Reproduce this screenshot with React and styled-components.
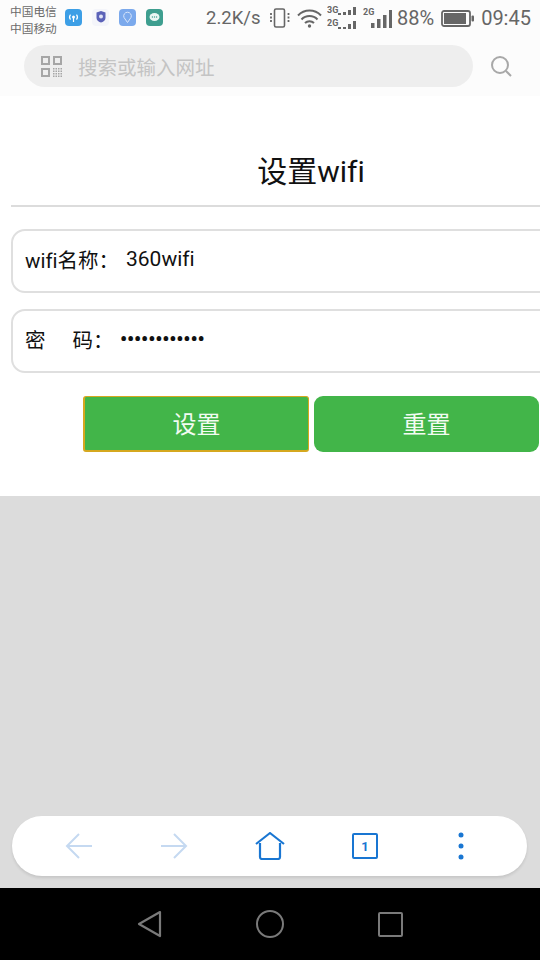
import React from 'react'
import styled, { createGlobalStyle } from 'styled-components'

const FONT = `Roboto, "Noto Sans CJK SC", sans-serif`
const BLUE = '#1976d2'
const STATUS_GREY = '#666'

const GlobalStyle = createGlobalStyle`
  html, body {
    margin: 0;
    padding: 0;
    background: #fff;
  }
  body {
    font-family: ${FONT};
    font-variant-ligatures: none;
  }
`

const Screen = styled.div`
  width: 540px;
  height: 960px;
  display: flex;
  flex-direction: column;
  overflow: hidden;
`

const TopArea = styled.div`
  height: 96px;
  flex: none;
  background: #fcfcfc;
`

const StatusBar = styled.div`
  height: 36px;
  margin-bottom: 9px;
  padding-left: 10px;
  display: flex;
  align-items: center;
  color: ${STATUS_GREY};
`

const Carriers = styled.div`
  font-size: 11.7px;
  line-height: 17px;
  width: 55px;
  color: #6a6a6a;
  margin-top: 5px;
  white-space: nowrap;
`

const AppIcons = styled.div`
  display: flex;
  gap: 10px;
  margin-bottom: 1px;
`

const AppIcon = styled.div`
  width: 17px;
  height: 17px;
  border-radius: 4px;
  background: ${({ $bg }) => $bg};
  display: flex;
  align-items: center;
  justify-content: center;
`

const Speed = styled.span`
  font-size: 18.5px;
  margin-left: 43px;
  width: 64px;
  flex: none;
  white-space: nowrap;
`

const StatusIcons = styled.div`
  display: flex;
  align-items: center;
`

const StatusText = styled.span`
  font-size: 20px;
  margin-left: ${({ $left }) => $left}px;
  white-space: nowrap;
`

const StatusIcon = styled.svg`
  margin-left: ${({ $left }) => $left || 0}px;
  flex: none;
`

const SearchRow = styled.div`
  display: flex;
  align-items: center;
`

const SearchBar = styled.div`
  width: 449px;
  height: 42px;
  margin-left: 24px;
  border-radius: 21px;
  background: #eeeeee;
  display: flex;
  align-items: center;
  padding-left: 17px;
  box-sizing: border-box;
`

const SearchHint = styled.span`
  font-size: 19.5px;
  color: #c4c4c4;
  margin-left: 16px;
`

const SearchButton = styled.div`
  margin-left: 17px;
  display: flex;
`

const Panel = styled.div`
  height: 400px;
  flex: none;
  width: 600px;
  margin-left: 11px;
  background: #fff;
  box-sizing: border-box;
`

const Title = styled.h1`
  margin: 0;
  height: 111px;
  box-sizing: border-box;
  padding-top: 57px;
  border-bottom: 2px solid #dcdcdc;
  text-align: center;
  font-size: 30px;
  line-height: 38px;
  font-weight: 400;
  color: #111;
`

const Field = styled.div`
  height: 64px;
  margin-top: ${({ $top }) => $top}px;
  border: 2px solid #dfdfdf;
  border-radius: 14px;
  box-sizing: border-box;
  display: flex;
  align-items: center;
  padding: 0 0 4px 12px;
  font-size: 21px;
  color: #111;
`

const FieldLabel = styled.span`
  width: ${({ $width }) => $width}px;
  flex: none;
  white-space: pre;
  font-size: ${({ $size }) => $size || 21}px;
  word-spacing: ${({ $gap }) => $gap || 0}px;
`

const Dots = styled.span`
  font-size: 20px;
  letter-spacing: -0.15px;
  font-weight: 700;
`

const Buttons = styled.div`
  display: flex;
  gap: 5px;
  margin: 23px 0 0 72px;
`

const Button = styled.div`
  width: ${({ $width }) => $width}px;
  height: 56px;
  box-sizing: border-box;
  border-radius: ${({ $focused }) => ($focused ? 3 : 9)}px;
  background: #42b549;
  border: ${({ $focused }) => ($focused ? '1px solid #d5a81f' : 'none')};
  border-left-width: ${({ $focused }) => ($focused ? 2 : 0)}px;
  border-bottom-width: ${({ $focused }) => ($focused ? 2 : 0)}px;
  color: #f2fbf2;
  font-size: 24px;
  padding-bottom: ${({ $focused }) => ($focused ? 3 : 4)}px;
  display: flex;
  align-items: center;
  justify-content: center;
`

const Backdrop = styled.div`
  flex: 1;
  background: #dcdcdc;
  padding: 320px 13px 0 12px;
`

const Toolbar = styled.div`
  height: 60px;
  border-radius: 30px;
  background: #fff;
  box-shadow: 0 2px 3px rgba(0, 0, 0, 0.1);
  display: grid;
  grid-template-columns: repeat(5, 95.5px);
  justify-content: center;
  align-items: center;
  justify-items: center;
`

const NavBar = styled.div`
  height: 72px;
  flex: none;
  background: #000;
  display: flex;
  align-items: center;
  justify-content: center;
  gap: 94px;
`

const TabBox = styled.div`
  width: 26px;
  height: 26px;
  border: 2px solid ${BLUE};
  border-radius: 2px;
  box-sizing: border-box;
  display: flex;
  align-items: center;
  justify-content: center;
  font-size: 13px;
  font-weight: 700;
  color: ${BLUE};
`

const Icon = ({ w, h, left, children }) => (
  <StatusIcon $left={left} width={w} height={h} viewBox={`0 0 ${w} ${h}`} fill="none">
    {children}
  </StatusIcon>
)

const TinyLabel = styled.text`
  font-size: 9px;
  font-weight: 700;
  font-family: Roboto, sans-serif;
  fill: ${STATUS_GREY};
`

const SignalBars = ({ bars, bottom, x, step = 5, width = 3 }) =>
  bars.map((height, i) => (
    <rect key={i} x={x + i * step} y={bottom - height} width={width} height={height} fill={STATUS_GREY} />
  ))

const qrDots = []
for (let row = 0; row < 4; row++) {
  for (let col = 0; col < 4; col++) {
    qrDots.push([12 + col * 2.5, 12 + row * 2.5])
  }
}

const Status = () => (
  <StatusBar>
    <Carriers>
      中国电信
      <br />
      中国移动
    </Carriers>
    <AppIcons>
      <AppIcon $bg="#3d9fe6">
        <Icon w={13} h={13}>
          <circle cx="6.5" cy="6" r="1.5" fill="#fff" />
          <path d="M3.5 3.5a4 4 0 0 0 0 5M9.5 3.5a4 4 0 0 1 0 5M6.5 7v4" stroke="#fff" strokeWidth="1.2" />
        </Icon>
      </AppIcon>
      <AppIcon $bg="#f4f5fa">
        <Icon w={14} h={15}>
          <path d="M2.5 2.5 7 1l4.5 1.5V8C11.5 10.5 9 12 7 12.5 5 12 2.5 10.5 2.5 8Z" fill="#5b62b8" />
          <circle cx="7" cy="6.5" r="2" fill="#dfe2f5" />
        </Icon>
      </AppIcon>
      <AppIcon $bg="#7ba9ec">
        <Icon w={13} h={13}>
          <path d="M6.5 11.5 3 6.5a3.8 3.8 0 1 1 7 0Z" stroke="#d8e6fb" strokeWidth="1" />
        </Icon>
      </AppIcon>
      <AppIcon $bg="#3e9e8f">
        <Icon w={13} h={13}>
          <ellipse cx="6.5" cy="6" rx="5" ry="4" fill="#eaf6f3" />
          <circle cx="4.4" cy="6" r=".7" fill="#3e9e8f" />
          <circle cx="6.5" cy="6" r=".7" fill="#3e9e8f" />
          <circle cx="8.6" cy="6" r=".7" fill="#3e9e8f" />
        </Icon>
      </AppIcon>
    </AppIcons>
    <Speed>2.2K/s</Speed>
    <StatusIcons>
      <Icon w={20} h={20}>
        <rect x="4.5" y="1" width="10" height="18" rx="1.5" stroke={STATUS_GREY} strokeWidth="1.6" />
        <path d="M1 5v10M18.5 5v10" stroke={STATUS_GREY} strokeWidth="1.8" strokeDasharray="2 1.5" />
      </Icon>
      <Icon w={25} h={19} left={7}>
        <path d="M1 6.5a16 16 0 0 1 23 0M4.5 10.5a11 11 0 0 1 16 0M8 14a6.5 6.5 0 0 1 9 0" stroke={STATUS_GREY} strokeWidth="2" />
        <circle cx="12.5" cy="17" r="1.7" fill={STATUS_GREY} />
      </Icon>
      <Icon w={31} h={24} left={5}>
        <TinyLabel x="0" y="7">3G</TinyLabel>
        <TinyLabel x="0" y="20">2G</TinyLabel>
        <SignalBars bars={[2, 3, 5, 8]} bottom={9} x={11} />
        <SignalBars bars={[2, 2, 5, 8]} bottom={23} x={11} />
      </Icon>
      <Icon w={29} h={21} left={5}>
        <TinyLabel x="0" y="7">2G</TinyLabel>
        <SignalBars bars={[5, 9, 13, 18]} bottom={20} x={8} step={6} width={3.5} />
      </Icon>
      <StatusText $left={5}>88%</StatusText>
      <Icon w={33} h={17} left={7}>
        <rect x="1" y="1" width="28" height="15" rx="2" stroke={STATUS_GREY} strokeWidth="1.8" />
        <rect x="3" y="3" width="22" height="11" fill={STATUS_GREY} />
        <rect x="30.5" y="5.5" width="2.5" height="6" rx="1" fill={STATUS_GREY} />
      </Icon>
      <StatusText $left={7}>09:45</StatusText>
    </StatusIcons>
  </StatusBar>
)

const Search = () => (
  <SearchRow>
    <SearchBar>
      <Icon w={21} h={21}>
        <g stroke="#a6a6a6" strokeWidth="2">
          <rect x="1" y="1" width="7" height="7" />
          <rect x="13" y="1" width="7" height="7" />
          <rect x="1" y="13" width="7" height="7" />
        </g>
        {qrDots.map(([x, y], i) => (
          <rect key={i} x={x} y={y} width="1.5" height="1.5" fill="#a6a6a6" />
        ))}
      </Icon>
      <SearchHint>搜索或输入网址</SearchHint>
    </SearchBar>
    <SearchButton>
      <Icon w={23} h={23}>
        <circle cx="10" cy="10" r="8" stroke="#a8a8a8" strokeWidth="2" />
        <path d="m16 16 5 5" stroke="#a8a8a8" strokeWidth="2" />
      </Icon>
    </SearchButton>
  </SearchRow>
)

export default function App() {
  return (
    <Screen>
      <GlobalStyle />
      <TopArea>
        <Status />
        <Search />
      </TopArea>
      <Panel>
        <Title>设置wifi</Title>
        <Field $top={22}>
          <FieldLabel $width={101} $size={20.5}>wifi名称：</FieldLabel>
          <span>360wifi</span>
        </Field>
        <Field $top={16}>
          <FieldLabel $width={95} $gap={22} $size={20.5}>密 码：</FieldLabel>
          <Dots>••••••••••••</Dots>
        </Field>
        <Buttons>
          <Button $focused $width={226}>设置</Button>
          <Button $width={225}>重置</Button>
        </Buttons>
      </Panel>
      <Backdrop>
        <Toolbar>
          <Icon w={28} h={28}>
            <path d="M27 14H2M14 2 2 14l12 12" stroke="#c5d9f1" strokeWidth="2" />
          </Icon>
          <Icon w={28} h={28}>
            <path d="M1 14h25M14 2l12 12-12 12" stroke="#c5d9f1" strokeWidth="2" />
          </Icon>
          <Icon w={30} h={28}>
            <path d="M1 12 15 1l14 11" stroke={BLUE} strokeWidth="2.2" strokeLinejoin="round" />
            <path d="M5 11v14a2 2 0 0 0 2 2h16a2 2 0 0 0 2-2V11" stroke={BLUE} strokeWidth="2.2" />
          </Icon>
          <TabBox>1</TabBox>
          <Icon w={8} h={28}>
            <circle cx="4" cy="3" r="2.5" fill={BLUE} />
            <circle cx="4" cy="14" r="2.5" fill={BLUE} />
            <circle cx="4" cy="25" r="2.5" fill={BLUE} />
          </Icon>
        </Toolbar>
      </Backdrop>
      <NavBar>
        <Icon w={25} h={28}>
          <path d="M23 2 2 14l21 12Z" stroke="#7a7a7a" strokeWidth="2.2" strokeLinejoin="round" />
        </Icon>
        <Icon w={28} h={28}>
          <circle cx="14" cy="14" r="13" stroke="#7a7a7a" strokeWidth="2" />
        </Icon>
        <Icon w={25} h={25}>
          <rect x="1" y="1" width="23" height="23" rx="1" stroke="#7a7a7a" strokeWidth="2" />
        </Icon>
      </NavBar>
    </Screen>
  )
}
